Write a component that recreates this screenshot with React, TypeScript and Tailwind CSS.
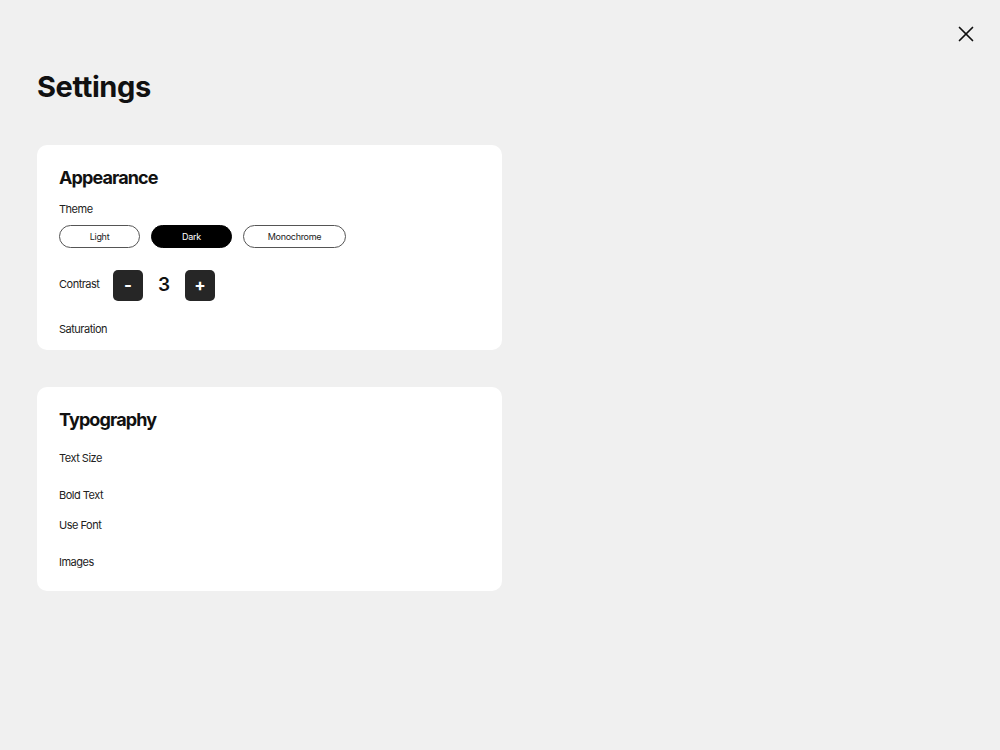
import React from "react"

const font = { fontFamily: "Inter, 'Noto Sans', sans-serif" }

function ThemeButton({ label, active }: { label: string; active?: boolean }) {
  return (
    <button
      className={
        active
          ? "h-[23px] rounded-full bg-black text-white text-[9px] tracking-[-0.3px] border border-black"
          : "h-[23px] rounded-full bg-white text-[#222] text-[9px] tracking-[-0.3px] border border-[#555]"
      }
      style={{ width: label === "Monochrome" ? 103 : 81 }}
    >
      {label}
    </button>
  )
}

function Label({ children, className = "" }: { children: React.ReactNode; className?: string }) {
  return <p className={"text-[11px] leading-[14px] tracking-[-0.5px] text-[#222] " + className}>{children}</p>
}

export default function App() {
  return (
    <div className="min-h-screen w-full bg-[#f0f0f0] relative" style={font}>
      <button className="absolute left-[958px] top-[26px] w-[16px] h-[16px]" aria-label="Close">
        <svg width="16" height="16" viewBox="0 0 16 16" fill="none" stroke="#111" strokeWidth="1.7" strokeLinecap="round">
          <path d="M1.5 1.5 L14.5 14.5" />
          <path d="M14.5 1.5 L1.5 14.5" />
        </svg>
      </button>

      <div className="pl-[37px] pt-[67px] w-[502px]">
        <h1 className="text-[29px] leading-[40px] font-bold text-[#111] tracking-[-0.4px]">Settings</h1>

        <div className="mt-[38px] bg-white rounded-[10px] px-[22px] pt-[21px] pb-[14px] h-[205px]">
          <h2 className="text-[18px] leading-[24px] font-bold text-[#111] tracking-[-0.9px]">Appearance</h2>
          <Label className="mt-[12px]">Theme</Label>
          <div className="mt-[9px] flex gap-[11px]">
            <ThemeButton label="Light" />
            <ThemeButton label="Dark" active />
            <ThemeButton label="Monochrome" />
          </div>
          <div className="mt-[22px] flex items-center">
            <Label className="w-[54px] -mt-[3px]">Contrast</Label>
            <button className="w-[30px] h-[31px] rounded-[5px] bg-[#262626] text-white text-[17px] font-bold leading-none">-</button>
            <span className="w-[42px] text-center text-[19px] font-semibold text-[#111]">3</span>
            <button className="w-[30px] h-[31px] rounded-[5px] bg-[#262626] text-white text-[17px] font-bold leading-none">+</button>
          </div>
          <Label className="mt-[21px]">Saturation</Label>
        </div>

        <div className="mt-[37px] bg-white rounded-[10px] px-[22px] pt-[21px] h-[204px]">
          <h2 className="text-[18px] leading-[24px] font-bold text-[#111] tracking-[-0.9px]">Typography</h2>
          <Label className="mt-[19px]">Text Size</Label>
          <Label className="mt-[23px]">Bold Text</Label>
          <Label className="mt-[16px]">Use Font</Label>
          <Label className="mt-[23px]">Images</Label>
        </div>
      </div>
    </div>
  )
}
